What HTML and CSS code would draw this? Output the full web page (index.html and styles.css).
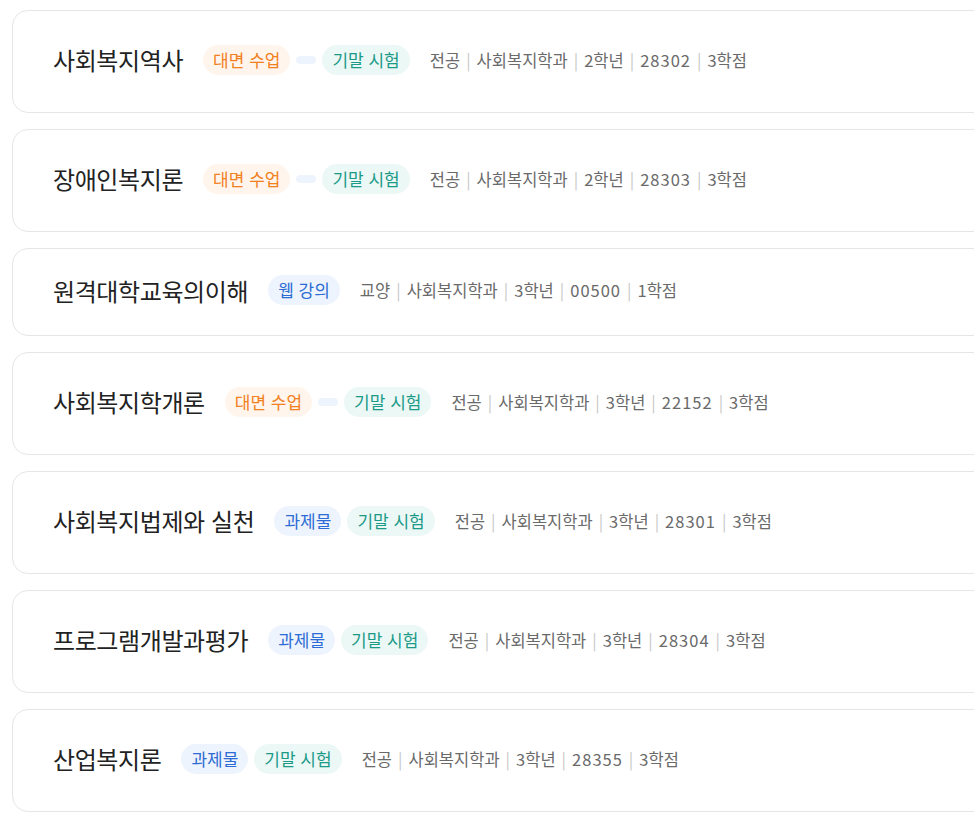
FILE: index.html
```html
<!DOCTYPE html>
<html lang="ko">
<head>
    <meta charset="UTF-8">
    <meta name="viewport" content="width=device-width, initial-scale=1.0">
    <title>수강 과목</title>
    <link rel="stylesheet" href="styles.css">
</head>
<body>
    <div class="course-list">
        <div class="course">
            <span class="course-title">사회복지역사</span>
            <div class="tags">
                <span class="tag tag-offline">대면 수업</span>
                <span class="tag tag-task"></span>
                <span class="tag tag-exam">기말 시험</span>
            </div>
            <div class="meta">
                <span>전공</span><span class="sep">|</span><span>사회복지학과</span><span class="sep">|</span><span>2학년</span><span class="sep">|</span><span class="num">28302</span><span class="sep">|</span><span>3학점</span>
            </div>
        </div>

        <div class="course">
            <span class="course-title">장애인복지론</span>
            <div class="tags">
                <span class="tag tag-offline">대면 수업</span>
                <span class="tag tag-task"></span>
                <span class="tag tag-exam">기말 시험</span>
            </div>
            <div class="meta">
                <span>전공</span><span class="sep">|</span><span>사회복지학과</span><span class="sep">|</span><span>2학년</span><span class="sep">|</span><span class="num">28303</span><span class="sep">|</span><span>3학점</span>
            </div>
        </div>

        <div class="course course-short">
            <span class="course-title">원격대학교육의이해</span>
            <div class="tags">
                <span class="tag tag-task">웹 강의</span>
            </div>
            <div class="meta">
                <span>교양</span><span class="sep">|</span><span>사회복지학과</span><span class="sep">|</span><span>3학년</span><span class="sep">|</span><span class="num">00500</span><span class="sep">|</span><span>1학점</span>
            </div>
        </div>

        <div class="course">
            <span class="course-title">사회복지학개론</span>
            <div class="tags">
                <span class="tag tag-offline">대면 수업</span>
                <span class="tag tag-task"></span>
                <span class="tag tag-exam">기말 시험</span>
            </div>
            <div class="meta">
                <span>전공</span><span class="sep">|</span><span>사회복지학과</span><span class="sep">|</span><span>3학년</span><span class="sep">|</span><span class="num">22152</span><span class="sep">|</span><span>3학점</span>
            </div>
        </div>

        <div class="course">
            <span class="course-title">사회복지법제와 실천</span>
            <div class="tags">
                <span class="tag tag-task">과제물</span>
                <span class="tag tag-exam">기말 시험</span>
            </div>
            <div class="meta">
                <span>전공</span><span class="sep">|</span><span>사회복지학과</span><span class="sep">|</span><span>3학년</span><span class="sep">|</span><span class="num">28301</span><span class="sep">|</span><span>3학점</span>
            </div>
        </div>

        <div class="course">
            <span class="course-title">프로그램개발과평가</span>
            <div class="tags">
                <span class="tag tag-task">과제물</span>
                <span class="tag tag-exam">기말 시험</span>
            </div>
            <div class="meta">
                <span>전공</span><span class="sep">|</span><span>사회복지학과</span><span class="sep">|</span><span>3학년</span><span class="sep">|</span><span class="num">28304</span><span class="sep">|</span><span>3학점</span>
            </div>
        </div>

        <div class="course">
            <span class="course-title">산업복지론</span>
            <div class="tags">
                <span class="tag tag-task">과제물</span>
                <span class="tag tag-exam">기말 시험</span>
            </div>
            <div class="meta">
                <span>전공</span><span class="sep">|</span><span>사회복지학과</span><span class="sep">|</span><span>3학년</span><span class="sep">|</span><span class="num">28355</span><span class="sep">|</span><span>3학점</span>
            </div>
        </div>
    </div>
</body>
</html>
```

FILE: styles.css
```css
html {
    overflow: hidden;
}
body {
    font-family: "Noto Sans CJK KR", "Noto Sans", sans-serif;
    margin: 0;
    background-color: #ffffff;
    color: #222;
}
.course-list {
    display: flex;
    flex-direction: column;
    gap: 16px;
    padding: 10px 0 0 12px;
}
.course {
    box-sizing: border-box;
    width: calc(100% + 40px);
    height: 103px;
    display: flex;
    align-items: center;
    padding: 0 40px 4px;
    border: 1px solid #e6e6e6;
    border-radius: 16px;
    background-color: #fff;
}
.course-short {
    height: 88px;
}
.course-title {
    font-size: 24px;
    letter-spacing: -0.4px;
    color: #222;
    margin-right: 20px;
    white-space: nowrap;
}
.tags {
    display: flex;
    align-items: center;
    gap: 6px;
    margin-right: 20px;
}
.tag {
    font-size: 17px;
    line-height: 22px;
    padding: 4px 10px;
    border-radius: 15px;
    white-space: nowrap;
}
.tag:empty {
    padding: 4px 10px;
    height: 0;
}
.tag-offline {
    color: #f2801e;
    background-color: #fff5ec;
}
.tag-task {
    color: #2c6cd4;
    background-color: #eef4fd;
}
.tag-exam {
    color: #1b9a88;
    background-color: #ecf8f6;
}
.meta {
    font-size: 16.5px;
    color: #6a6a6a;
    white-space: nowrap;
}
.num {
    letter-spacing: 1px;
}
.sep {
    color: #c8c8c8;
    margin: 0 6px;
}
```
